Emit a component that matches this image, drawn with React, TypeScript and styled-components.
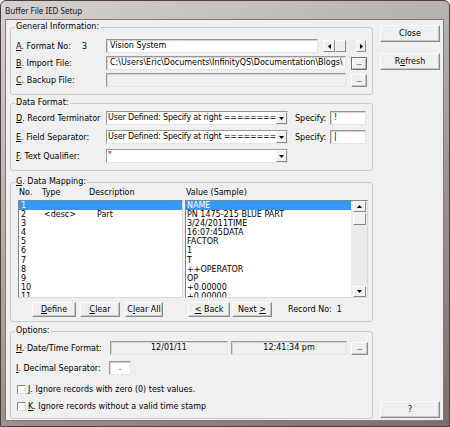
import React from "react";
import styled, { createGlobalStyle } from "styled-components";

const GlobalStyle = createGlobalStyle`
  html, body { margin: 0; padding: 0; }
  body {
    background: #ffffff;
    font-family: "DejaVu Sans", Verdana, sans-serif;
    font-size: 8px;
    color: #000;
  }
  * { box-sizing: border-box; }
`;

const Window = styled.div`
  width: 450px;
  height: 427px;
  display: flex;
  flex-direction: column;
  border: 1px solid #4b403e;
  border-radius: 6px 6px 0 0;
  padding: 0 5px 5px 4px;
  background:
    linear-gradient(90deg, rgba(255, 255, 255, 0.14), rgba(0, 0, 0, 0.12)),
    linear-gradient(180deg, #d2cbc8 0%, #b7aeab 35%, #8c7d79 100%);
`;

const TitleBar = styled.div`
  height: 19px;
  display: flex;
  align-items: center;
  font-family: "Noto Sans", "DejaVu Sans", sans-serif;
  font-size: 8px;
  color: #141414;
`;

const Client = styled.div`
  flex: 1;
  display: flex;
  gap: 7px;
  padding: 1px 3px 1px 4px;
  background: #f0f0f0;
  border: 1px solid #857875;
`;

const LeftCol = styled.div`
  width: 363px;
  display: flex;
  flex-direction: column;
`;

const RightCol = styled.div`
  width: 60px;
  display: flex;
  flex-direction: column;
  padding: 4px 0 1px;
  gap: 11px;
`;

const Group = styled.fieldset<{ $h: number; $mt?: number }>`
  margin: ${p => p.$mt ?? 0}px 0 0;
  padding: 0 0 0 5px;
  min-width: 0;
  height: ${p => p.$h}px;
  border: 1px solid #cacaca;
  border-radius: 3px;
`;

const Legend = styled.legend`
  margin-left: -1px;
  padding: 0 1px;
  line-height: 10px;
  font-size: 8px;
`;

const Rows = styled.div<{ $pt: number; $gap: number }>`
  display: flex;
  flex-direction: column;
  padding-top: ${p => p.$pt}px;
  gap: ${p => p.$gap}px;
`;

const Row = styled.div<{ $h?: number; $mt?: number }>`
  display: flex;
  align-items: center;
  height: ${p => p.$h ?? 14}px;
  margin-top: ${p => p.$mt ?? 0}px;
  white-space: nowrap;
`;

const Label = styled.span<{ $w: number; $ml?: number }>`
  width: ${p => p.$w}px;
  margin-left: ${p => p.$ml ?? 0}px;
  flex: none;
  white-space: nowrap;
`;

const U = styled.span`
  text-decoration: underline;
`;

const TextBox = styled.div<{ $w: number; $bg?: string; $center?: boolean; $ml?: number; $h?: number }>`
  width: ${p => p.$w}px;
  height: ${p => p.$h ?? 14}px;
  flex: none;
  margin-left: ${p => p.$ml ?? 0}px;
  padding: 0 3px;
  background: ${p => p.$bg ?? "#fff"};
  border: 1px solid;
  border-color: #999999 #e4e4e4 #e4e4e4 #999999;
  box-shadow: inset 1px 1px 0 #d4d4d4;
  line-height: ${p => (p.$h ?? 14) - 2}px;
  white-space: nowrap;
  overflow: hidden;
  text-align: ${p => (p.$center ? "center" : "left")};
`;

const Btn = styled.button<{ $w: number; $h?: number; $ml?: number; $dark?: boolean }>`
  width: ${p => p.$w}px;
  height: ${p => p.$h ?? 15}px;
  margin: 0 0 0 ${p => p.$ml ?? 0}px;
  padding: 0;
  flex: none;
  display: flex;
  align-items: center;
  justify-content: center;
  font: inherit;
  color: #000;
  background: #f0f0f0;
  border: 1px solid;
  border-color: ${p => (p.$dark ? "#6f6f6f" : "#fdfdfd #8a8a8a #8a8a8a #fdfdfd")};
  box-shadow: ${p => (p.$dark ? "inset 1px 1px 0 #fff, inset -1px -1px 0 #b8b8b8" : "inset -1px -1px 0 #c6c6c6")};
  white-space: nowrap;
`;

const BottomBtn = styled(Btn)`
  margin-top: auto;
`;

const Dots = styled(Btn)`
  align-items: flex-end;
  padding-bottom: 2px;
  font-size: 7px;
  letter-spacing: -0.5px;
`;

const HScroll = styled.div`
  width: 43px;
  height: 12px;
  margin-left: 5px;
  display: flex;
  background: #ececec;
`;

const ScrollBtn = styled.div<{ $w: number; $h: number; $mt?: number; $auto?: boolean }>`
  width: ${p => p.$w}px;
  height: ${p => p.$h}px;
  flex: none;
  margin-top: ${p => (p.$auto ? "auto" : `${p.$mt ?? 0}px`)};
  display: flex;
  align-items: center;
  justify-content: center;
  background: #f0f0f0;
  border: 1px solid;
  border-color: #fdfdfd #8a8a8a #8a8a8a #fdfdfd;
`;

const Track = styled.div`
  flex: 1;
`;

const Combo = styled.div<{ $w: number }>`
  width: ${p => p.$w}px;
  height: 14px;
  flex: none;
  display: flex;
  background: #fff;
  border: 1px solid;
  border-color: #999999 #e4e4e4 #e4e4e4 #999999;
`;

const ComboText = styled.span`
  flex: 1;
  min-width: 0;
  padding-left: 1px;
  line-height: 12px;
  letter-spacing: -0.16px;
  overflow: hidden;
  white-space: nowrap;
`;

const DropBtn = styled.div`
  width: 11px;
  height: 12px;
  flex: none;
  display: flex;
  align-items: center;
  justify-content: center;
  background: #f0f0f0;
  border: 1px solid;
  border-color: #fdfdfd #8a8a8a #8a8a8a #fdfdfd;
`;

const MapHead = styled.div`
  display: grid;
  grid-template-columns: 23px 47px 97px auto;
  height: 10px;
  line-height: 10px;
  padding: 0 0 0 3px;
  margin-top: 1px;
`;

const Lists = styled.div`
  display: flex;
  gap: 2px;
  margin: 2px 0 0 2px;
`;

const ListPane = styled.div<{ $w: number }>`
  width: ${p => p.$w}px;
  height: 98px;
  flex: none;
  display: flex;
  background: #fff;
  border: 1px solid;
  border-color: #858585 #dadada #dadada #858585;
  overflow: hidden;
`;

const ListBody = styled.div`
  flex: 1;
  min-width: 0;
`;

const ListRow = styled.div<{ $sel?: boolean; $cols?: string; $pl?: number }>`
  height: 9.1px;
  line-height: 9.1px;
  display: grid;
  grid-template-columns: ${p => p.$cols ?? "1fr"};
  padding-left: ${p => p.$pl ?? 2}px;
  background: ${p => (p.$sel ? "#3399ff" : "transparent")};
  color: ${p => (p.$sel ? "#fff" : "#000")};
  white-space: nowrap;
`;

const VScroll = styled.div`
  width: 16px;
  flex: none;
  display: flex;
  flex-direction: column;
  padding: 0 1px 0 2px;
  background: #ebebeb;
`;

const ButtonRow = styled.div`
  display: flex;
  align-items: center;
  margin: 4px 0 0 16px;
`;

const Check = styled.span`
  width: 9px;
  height: 9px;
  flex: none;
  margin: 0 2px 0 1px;
  background: #fff;
  border: 1px solid;
  border-color: #8a8a8a #dcdcdc #dcdcdc #8a8a8a;
`;

type Dir = "up" | "down" | "left" | "right";

const Arrow = ({ dir }: { dir: Dir }) => {
  const vertical = dir === "up" || dir === "down";
  const pts = {
    up: "0,3 2.5,0 5,3",
    down: "0,0 5,0 2.5,3",
    left: "3,0 3,5 0,2.5",
    right: "0,0 0,5 3,2.5",
  }[dir];
  return (
    <svg width={vertical ? 5 : 3} height={vertical ? 3 : 5} viewBox={vertical ? "0 0 5 3" : "0 0 3 5"}>
      <polygon points={pts} fill="#000" />
    </svg>
  );
};

const values = [
  "NAME",
  "PN 1475-215 BLUE PART",
  "3/24/2011TIME",
  "16:07:45DATA",
  "FACTOR",
  "1",
  "T",
  "++OPERATOR",
  "OP",
  "+0.00000",
  "+0.00000",
];

export default function App() {
  return (
    <>
      <GlobalStyle />
      <Window>
        <TitleBar>Buffer File IED Setup</TitleBar>
        <Client>
          <LeftCol>
            <Group $h={73} $mt={1}>
              <Legend>General Information:</Legend>
              <Rows $pt={7} $gap={3}>
                <Row>
                  <Label $w={66}>
                    <U>A</U>. Format No:
                  </Label>
                  <Label $w={24}>3</Label>
                  <TextBox $w={212}>Vision System</TextBox>
                  <HScroll>
                    <ScrollBtn $w={12} $h={12}>
                      <Arrow dir="left" />
                    </ScrollBtn>
                    <ScrollBtn $w={11} $h={12} />
                    <Track />
                    <ScrollBtn $w={10} $h={12}>
                      <Arrow dir="right" />
                    </ScrollBtn>
                  </HScroll>
                </Row>
                <Row>
                  <Label $w={90}>
                    <U>B</U>. Import File:
                  </Label>
                  <TextBox $w={240}>C:\Users\Eric\Documents\InfinityQS\Documentation\Blogs\</TextBox>
                  <Dots $w={16} $h={13} $ml={5} $dark>
                    ...
                  </Dots>
                </Row>
                <Row>
                  <Label $w={90}>
                    <U>C</U>. Backup File:
                  </Label>
                  <TextBox $w={240} $bg="#f0f0f0" />
                  <Dots $w={16} $h={13} $ml={5}>
                    ...
                  </Dots>
                </Row>
              </Rows>
            </Group>

            <Group $h={73} $mt={3}>
              <Legend>Data Format:</Legend>
              <Rows $pt={3} $gap={5}>
                <Row>
                  <Label $w={90}>
                    <U>D</U>. Record Terminator
                  </Label>
                  <Combo $w={182}>
                    <ComboText>User Defined: Specify at right ========</ComboText>
                    <DropBtn>
                      <Arrow dir="down" />
                    </DropBtn>
                  </Combo>
                  <Label $w={35} $ml={7}>
                    Specify:
                  </Label>
                  <TextBox $w={36}>!</TextBox>
                </Row>
                <Row>
                  <Label $w={90}>
                    <U>E</U>. Field Separator:
                  </Label>
                  <Combo $w={182}>
                    <ComboText>User Defined: Specify at right ========</ComboText>
                    <DropBtn>
                      <Arrow dir="down" />
                    </DropBtn>
                  </Combo>
                  <Label $w={35} $ml={7}>
                    Specify:
                  </Label>
                  <TextBox $w={36}>|</TextBox>
                </Row>
                <Row>
                  <Label $w={90}>
                    <U>F</U>. Text Qualifier:
                  </Label>
                  <Combo $w={182}>
                    <ComboText>"</ComboText>
                    <DropBtn>
                      <Arrow dir="down" />
                    </DropBtn>
                  </Combo>
                </Row>
              </Rows>
            </Group>

            <Group $h={145} $mt={6}>
              <Legend>
                <U>G</U>. Data Mapping:
              </Legend>
              <MapHead>
                <span>No.</span>
                <span>Type</span>
                <span>Description</span>
                <span>Value (Sample)</span>
              </MapHead>
              <Lists>
                <ListPane $w={165}>
                  <ListBody>
                    {values.map((_, i) => (
                      <ListRow key={i} $sel={i === 0} $cols="23px 53px 1fr">
                        <span>{i + 1}</span>
                        <span>{i === 1 ? "<desc>" : ""}</span>
                        <span>{i === 1 ? "Part" : ""}</span>
                      </ListRow>
                    ))}
                  </ListBody>
                </ListPane>
                <ListPane $w={183}>
                  <ListBody>
                    {values.map((v, i) => (
                      <ListRow key={i} $sel={i === 0} $pl={1}>
                        {v}
                      </ListRow>
                    ))}
                  </ListBody>
                  <VScroll>
                    <ScrollBtn $w={13} $h={11}>
                      <Arrow dir="up" />
                    </ScrollBtn>
                    <ScrollBtn $w={13} $h={12} $mt={1} />
                    <ScrollBtn $w={13} $h={11} $auto>
                      <Arrow dir="down" />
                    </ScrollBtn>
                  </VScroll>
                </ListPane>
              </Lists>
              <ButtonRow>
                <Btn $w={44}>
                  <U>D</U>efine
                </Btn>
                <Btn $w={40} $ml={4}>
                  <U>C</U>lear
                </Btn>
                <Btn $w={38} $ml={5}>
                  C<U>l</U>ear All
                </Btn>
                <Btn $w={42} $ml={25}>
                  <U>&lt;</U>&nbsp;Back
                </Btn>
                <Btn $w={40} $ml={2}>
                  Next&nbsp;<U>&gt;</U>
                </Btn>
                <Label $w={60} $ml={16}>
                  Record No:&nbsp; 1
                </Label>
              </ButtonRow>
            </Group>

            <Group $h={93} $mt={4}>
              <Legend>Options:</Legend>
              <Row $mt={5}>
                <Label $w={94}>
                  <U>H</U>. Date/Time Format:
                </Label>
                <TextBox $w={118} $bg="#f0f0f0" $center>
                  12/01/11
                </TextBox>
                <TextBox $w={116} $ml={3} $bg="#f0f0f0" $center>
                  12:41:34 pm
                </TextBox>
                <Dots $w={17} $h={13} $ml={4}>
                  ...
                </Dots>
              </Row>
              <Row $mt={6}>
                <Label $w={93}>
                  <U>I</U>. Decimal Separator:
                </Label>
                <TextBox $w={22} $center>
                  .
                </TextBox>
              </Row>
              <Row $h={10} $mt={9}>
                <Check />
                <span>
                  <U>J</U>. Ignore records with zero (0) test values.
                </span>
              </Row>
              <Row $h={10} $mt={7}>
                <Check />
                <span>
                  <U>K</U>. Ignore records without a valid time stamp
                </span>
              </Row>
            </Group>
          </LeftCol>

          <RightCol>
            <Btn $w={60} $h={17}>
              Close
            </Btn>
            <Btn $w={60} $h={17}>
              R<U>e</U>fresh
            </Btn>
            <BottomBtn $w={60} $h={17}>
              ?
            </BottomBtn>
          </RightCol>
        </Client>
      </Window>
    </>
  );
}
